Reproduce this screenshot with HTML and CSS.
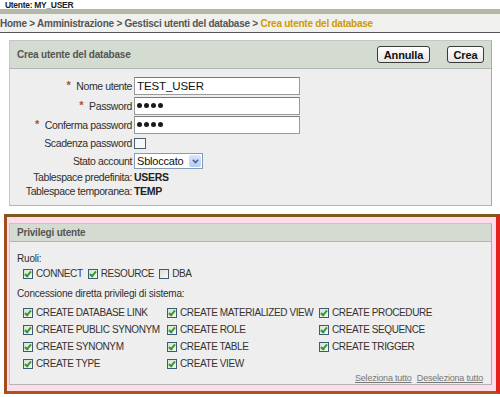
FILE: index.html
```html
<!DOCTYPE html>
<html lang="it">
<head>
    <meta charset="UTF-8">
    <meta name="viewport" content="width=device-width, initial-scale=1.0">
    <title>Crea utente del database</title>
    <link rel="stylesheet" href="styles.css">
</head>
<body>
    <div class="user-line">Utente: MY_USER</div>
    <div class="top-band"></div>
    <div class="breadcrumb">Home &gt; Amministrazione &gt; Gestisci utenti del database &gt; <span class="current">Crea utente del database</span></div>

    <div class="panel panel-create">
        <div class="panel-head">
            <span class="panel-title">Crea utente del database</span>
            <div class="actions">
                <span class="btn btn-cancel">Annulla</span>
                <span class="btn btn-create">Crea</span>
            </div>
        </div>
        <div class="panel-body form">
            <div class="row r1">
                <span class="label"><span class="req">*</span>Nome utente</span>
                <span class="input">TEST_USER</span>
            </div>
            <div class="row r2">
                <span class="label"><span class="req">*</span>Password</span>
                <span class="input pwd"><i></i><i></i><i></i><i></i></span>
            </div>
            <div class="row r3">
                <span class="label"><span class="req">*</span>Conferma password</span>
                <span class="input pwd"><i></i><i></i><i></i><i></i></span>
            </div>
            <div class="row r4">
                <span class="label">Scadenza password</span>
                <span class="cb cb-form"></span>
            </div>
            <div class="row r5">
                <span class="label">Stato account</span>
                <span class="select">
                    <span class="select-text">Sbloccato</span>
                    <span class="select-btn">
                        <svg width="7" height="5" viewBox="0 0 7 5"><path d="M0.8 0.8L3.5 3.6L6.2 0.8" fill="none" stroke="#4d6185" stroke-width="1.6"/></svg>
                    </span>
                </span>
            </div>
            <div class="row r6">
                <span class="label">Tablespace predefinita:</span>
                <span class="value">USERS</span>
            </div>
            <div class="row r7">
                <span class="label">Tablespace temporanea:</span>
                <span class="value">TEMP</span>
            </div>
        </div>
    </div>

    <div class="highlight">
        <div class="panel panel-priv">
            <div class="panel-head small">
                <span class="panel-title">Privilegi utente</span>
            </div>
            <div class="panel-body priv">
                <div class="line">Ruoli:</div>
                <div class="roles">
                    <span class="item"><span class="cb on"></span>CONNECT</span>
                    <span class="item"><span class="cb on"></span>RESOURCE</span>
                    <span class="item"><span class="cb"></span>DBA</span>
                </div>
                <div class="line grants-title">Concessione diretta privilegi di sistema:</div>
                <div class="grants">
                    <span class="item"><span class="cb on"></span>CREATE DATABASE LINK</span>
                    <span class="item"><span class="cb on"></span>CREATE MATERIALIZED VIEW</span>
                    <span class="item"><span class="cb on"></span>CREATE PROCEDURE</span>
                    <span class="item"><span class="cb on"></span>CREATE PUBLIC SYNONYM</span>
                    <span class="item"><span class="cb on"></span>CREATE ROLE</span>
                    <span class="item"><span class="cb on"></span>CREATE SEQUENCE</span>
                    <span class="item"><span class="cb on"></span>CREATE SYNONYM</span>
                    <span class="item"><span class="cb on"></span>CREATE TABLE</span>
                    <span class="item"><span class="cb on"></span>CREATE TRIGGER</span>
                    <span class="item"><span class="cb on"></span>CREATE TYPE</span>
                    <span class="item"><span class="cb on"></span>CREATE VIEW</span>
                </div>
                <div class="links">
                    <a href="#">Seleziona tutto</a>
                    <a href="#">Deseleziona tutto</a>
                </div>
            </div>
        </div>
    </div>
</body>
</html>
```

FILE: styles.css
```css
body {
    margin: 0;
    font-family: "Liberation Sans", Arial, sans-serif;
    font-size: 10px;
    letter-spacing: -0.2px;
    color: #2a2a2a;
    background-color: #ffffff;
}

.user-line {
    height: 8px;
    padding: 1px 0 0 5px;
    font-size: 8.5px;
    font-weight: bold;
    line-height: 9px;
    letter-spacing: -0.3px;
    color: #222;
}

.top-band {
    height: 5px;
    background-color: #b4b8a6;
}

.breadcrumb {
    height: 18px;
    line-height: 20px;
    overflow: hidden;
    white-space: nowrap;
    background-color: #f0f0ee;
    border-bottom: 1px solid #555;
    font-weight: bold;
    letter-spacing: -0.25px;
    color: #555;
}

.breadcrumb .current {
    color: #d09a00;
}

/* panels */

.panel {
    background-color: #eeeeee;
    border: 1px solid #c6c6c6;
    border-right-color: #a9a9a9;
    border-bottom-color: #b5b5b5;
}

.panel-create {
    margin: 7px 8px 0 9px;
}

.panel-head {
    display: flex;
    align-items: center;
    justify-content: space-between;
    height: 27px;
    padding: 0 7px;
    background-color: #d4dbd0;
    border-bottom: 1px solid #b4b4b4;
}

.panel-head.small {
    height: 17px;
}

.panel-title {
    font-weight: bold;
    color: #555;
}

.actions {
    display: flex;
    gap: 17px;
}

.btn {
    display: flex;
    align-items: center;
    justify-content: center;
    box-sizing: border-box;
    height: 17px;
    border: 1px solid #3a3a3a;
    border-radius: 3px;
    background: linear-gradient(#ffffff, #e6e6e6);
    font-size: 11px;
    font-weight: bold;
    letter-spacing: -0.1px;
    color: #111;
}

.btn-cancel {
    width: 53px;
}

.btn-create {
    width: 37px;
}

/* form */

.panel-body.form {
    padding: 7px 0 8px 0;
}

.row {
    display: grid;
    grid-template-columns: 122px auto;
    column-gap: 2px;
    align-items: center;
}

.r1 { height: 20px; }
.r2 { height: 19px; }
.r3 { height: 19px; }
.r4 { height: 18px; }
.r5 { height: 18px; }
.r6 { height: 14px; }
.r7 { height: 13px; }

.label {
    text-align: right;
    white-space: nowrap;
    font-size: 10.5px;
    letter-spacing: -0.4px;
    color: #2e2e2e;
}

.req {
    display: inline-block;
    margin-right: 6px;
    font-size: 11px;
    font-weight: bold;
    line-height: 8px;
    vertical-align: 1px;
    color: #a8502e;
}

.input {
    display: flex;
    align-items: center;
    box-sizing: border-box;
    width: 166px;
    height: 18px;
    padding-left: 2px;
    background-color: #ffffff;
    border: 1px solid #9a9a9a;
    border-top-color: #7a7a7a;
    font-size: 11.5px;
    letter-spacing: -0.1px;
    color: #111;
}

.pwd {
    gap: 2px;
}

.pwd i {
    width: 5px;
    height: 5px;
    border-radius: 50%;
    background-color: #1a1a1a;
}

.select {
    display: flex;
    box-sizing: border-box;
    width: 69px;
    height: 16px;
    background-color: #ffffff;
    border: 1px solid #7f9db9;
}

.select-text {
    flex: 1;
    padding-left: 2px;
    font-size: 11px;
    line-height: 14px;
    letter-spacing: -0.2px;
    color: #111;
}

.select-btn {
    display: flex;
    align-items: center;
    justify-content: center;
    width: 12px;
    margin: 1px;
    border-radius: 2px;
    background: linear-gradient(#dbe5fb, #b8cbf3);
}

.value {
    font-weight: bold;
    font-size: 10.5px;
    letter-spacing: -0.3px;
    color: #222;
}

/* checkboxes */

.cb {
    position: relative;
    display: inline-block;
    flex: none;
    box-sizing: border-box;
    width: 10px;
    height: 10px;
    margin-right: 3px;
    border: 1px solid #3d5a77;
    background: linear-gradient(135deg, #dcdfd6, #f8f8f4);
}

.cb.on::after {
    content: "";
    position: absolute;
    left: 2px;
    top: 0px;
    width: 2px;
    height: 5px;
    border: solid #2e9e2e;
    border-width: 0 2px 2px 0;
    transform: rotate(40deg);
}

.cb-form {
    width: 12px;
    height: 11px;
    background: #f8f8f6;
    border-color: #4a5e74;
}

/* privileges */

.highlight {
    margin: 8px 0 0 4px;
    padding: 6px 4px 6px 2px;
    background-color: #fddcec;
    border-style: solid;
    border-width: 3px 4px 3px 3px;
    border-color: #7c5a1c #e2211c #b0521e #a34b1c;
}

.panel-body.priv {
    padding: 10px 8px 0 7px;
}

.line {
    height: 14px;
    line-height: 14px;
    color: #2e2e2e;
}

.roles {
    display: flex;
    align-items: center;
    gap: 5px;
    height: 15px;
    padding-left: 6px;
}

.grants-title {
    margin-top: 6px;
}

.grants {
    display: grid;
    grid-template-columns: 144px 152px auto;
    grid-auto-rows: 17px;
    margin-top: 3px;
    padding-left: 6px;
}

.item {
    display: flex;
    align-items: center;
    white-space: nowrap;
    letter-spacing: -0.4px;
    color: #333;
}

.links {
    height: 12px;
    line-height: 12px;
    text-align: right;
    font-size: 9px;
}

.links a {
    margin-left: 3px;
    color: #777;
    text-decoration: underline;
}
```
